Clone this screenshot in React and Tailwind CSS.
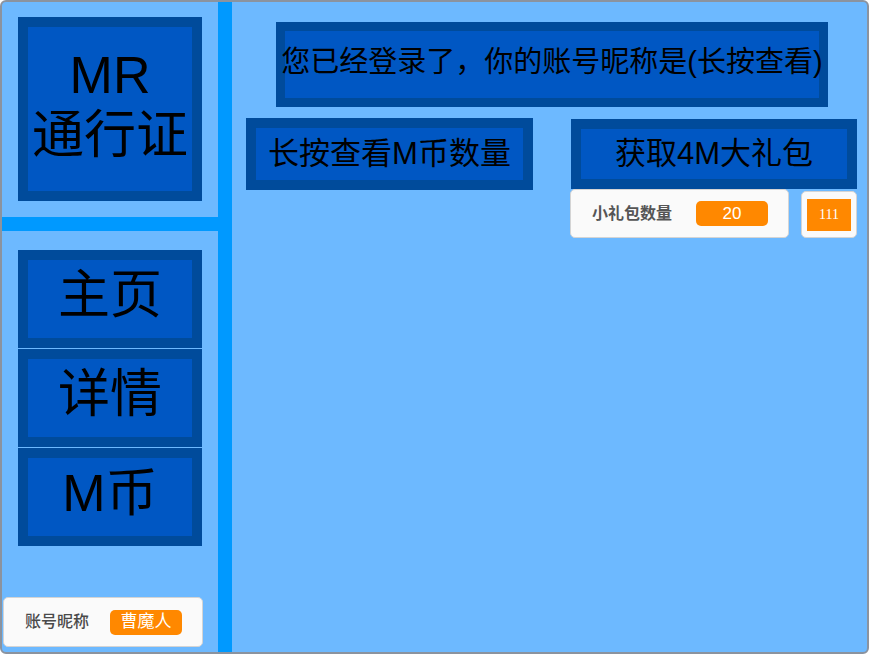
const sans = { fontFamily: '"Liberation Sans", "Noto Sans CJK SC", sans-serif' };

function BlueBox({ className = '', children }) {
  return (
    <div className={`flex items-center justify-center border-[#004b9b] bg-[#0057c3] text-black ${className}`}>
      {children}
    </div>
  );
}

export default function App() {
  return (
    <div
      className="w-[869px] h-[654px] border-2 border-[#8b939f] rounded-[6px] bg-[#6db9ff] overflow-hidden flex"
      style={sans}
    >
      {/* sidebar */}
      <div className="w-[216px] flex flex-col">
        <div className="h-[215px] pt-[15px] pl-[16px]">
          <BlueBox className="w-[184px] h-[184px] border-[10px] pb-[8px] flex-col text-[52px] leading-[60px]">
            <span>MR</span>
            <span>通行证</span>
          </BlueBox>
        </div>
        <div className="h-[14px] bg-[#0099ff]" />
        <div className="pt-[19px] pl-[16px] flex flex-col gap-px">
          <BlueBox className="w-[184px] h-[98px] border-[10px] pb-[8px] text-[52px]">主页</BlueBox>
          <BlueBox className="w-[184px] h-[98px] border-[10px] pb-[8px] text-[52px]">详情</BlueBox>
          <BlueBox className="w-[184px] h-[98px] border-[10px] pb-[8px] text-[52px]">M币</BlueBox>
        </div>
        <div className="flex-1" />
        <div className="ml-px mb-[5px] w-[200px] h-[50px] bg-[#fafafa] border border-[#d4d4d4] rounded-[5px] flex items-center pl-[21px]">
          <span className="text-[16px] font-medium text-[#4a4a4a]">账号昵称</span>
          <span className="ml-[21px] w-[72px] h-[25px] rounded-[5px] bg-[#ff8800] text-white text-[17px] flex items-center justify-center">
            曹魔人
          </span>
        </div>
      </div>

      <div className="w-[14px] bg-[#0099ff]" />

      {/* main */}
      <div className="flex-1 flex flex-col">
        <div className="pt-[20px] pl-[44px]">
          <BlueBox className="w-[552px] h-[85px] border-[9px] pb-[4px] text-[29px] whitespace-nowrap">
            您已经登录了，你的账号昵称是(长按查看)
          </BlueBox>
        </div>
        <div className="pt-[11px] pl-[14px] flex items-start gap-[38px]">
          <BlueBox className="w-[287px] h-[72px] border-[10px] text-[31px] whitespace-nowrap">
            长按查看M币数量
          </BlueBox>
          <div className="mt-px flex flex-col">
            <BlueBox className="w-[286px] h-[70px] border-[10px] text-[31px] whitespace-nowrap">
              获取4M大礼包
            </BlueBox>
            <div className="flex items-start gap-[12px] -ml-px">
              <div className="w-[219px] h-[49px] bg-[#fafafa] border border-[#d4d4d4] rounded-[5px] flex items-center pl-[21px]">
                <span className="text-[16px] font-bold text-[#555]">小礼包数量</span>
                <span className="ml-[24px] w-[72px] h-[25px] rounded-[5px] bg-[#ff8800] text-white text-[17px] flex items-center justify-center">
                  20
                </span>
              </div>
              <div className="mt-[2px] w-[56px] h-[47px] bg-[#fafafa] border border-[#d4d4d4] rounded-[5px] flex items-center justify-center">
                <span
                  className="w-[44px] h-[32px] bg-[#ff8800] text-white text-[14px] flex items-center justify-center"
                  style={{ fontFamily: '"Liberation Serif", serif' }}
                >
                  111
                </span>
              </div>
            </div>
          </div>
        </div>
      </div>
    </div>
  );
}
